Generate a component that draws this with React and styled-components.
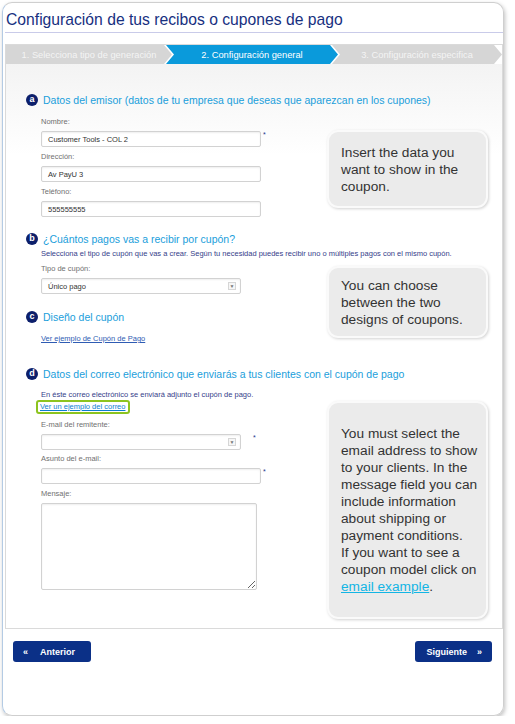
import React from 'react';
import styled, { createGlobalStyle } from 'styled-components';

const Global = createGlobalStyle`
    body {
        margin: 0;
        background: #fff;
        font-family: "Liberation Sans", Arial, sans-serif;
    }
`

const Card = styled.div`
    box-sizing: border-box;
    margin: 2px 0 0 2px;
    width: 502px;
    height: 714px;
    border: 1px solid #cfcfcf;
    border-left-color: #b4cbe4;
    border-radius: 10px;
    box-shadow: 1px 2px 4px rgba(0, 0, 0, .25);
    padding-left: 2px;
    display: flex;
    flex-direction: column;
`

const Title = styled.h1`
    margin: 0 0 11px;
    padding: 7px 0 2px 1px;
    font-size: 15.7px;
    line-height: 20px;
    font-weight: normal;
    color: #17307f;
    border-bottom: 1px solid #c9cbe9;
`

const Panel = styled.div`
    border: 1px solid #dadada;
    background: linear-gradient(#f1f1f1, #fff 110px);
`

const Steps = styled.div`
    display: flex;
    height: 19px;
    background: #fff;
`

const Step = styled.div`
    flex: ${props => props.grow ? '1' : `0 0 ${props.width}px`};
    margin-left: ${props => props.first ? 0 : -6}px;
    background: ${props => props.active ? '#0a9adb' : '#d6d6d6'};
    color: ${props => props.active ? '#fff' : '#f4f4f4'};
    font-size: 9.3px;
    display: flex;
    align-items: center;
    justify-content: center;
    clip-path: ${props => props.first
        ? 'polygon(0 0, calc(100% - 8px) 0, 100% 50%, calc(100% - 8px) 100%, 0 100%)'
        : 'polygon(0 0, calc(100% - 8px) 0, 100% 50%, calc(100% - 8px) 100%, 0 100%, 8px 50%)'};
`

const Content = styled.div`
    padding: 29px 14px 9px 20px;
`

const Heading = styled.div`
    display: flex;
    align-items: center;
    gap: 5px;
    margin-top: ${props => props.top || 0}px;
    height: 14px;
    font-size: 10.5px;
    color: #1a9edb;
    white-space: nowrap;
`

const Badge = styled.span`
    width: 12px;
    height: 12px;
    border-radius: 50%;
    background: #0c1f6b;
    color: #fff;
    font-size: 9px;
    font-weight: bold;
    line-height: 11px;
    text-align: center;
    flex: none;
`

const Note = styled.div`
    margin: ${props => props.top || 0}px 0 0 ${props => props.indent || 0}px;
    font-size: 7.5px;
    line-height: 10px;
    color: #35408a;
    white-space: nowrap;
`

const Row = styled.div`
    display: grid;
    grid-template-columns: 1fr 161px;
    align-items: start;
`

const Fields = styled.div`
    display: flex;
    flex-direction: column;
    align-items: flex-start;
`

const Label = styled.div`
    margin: ${props => props.top || 4}px 0 4px 15px;
    font-size: 7.5px;
    line-height: 11px;
    color: #707070;
`

const FieldLine = styled.div`
    display: flex;
    align-items: flex-start;
    margin-left: 15px;
`

const Input = styled.div`
    box-sizing: border-box;
    width: ${props => props.width}px;
    height: 16px;
    border: 1px solid #d2d2d2;
    border-radius: 2px;
    background: #fff;
    box-shadow: inset 0 1px 2px rgba(0, 0, 0, .07);
    padding: 0 4px 0 6px;
    display: flex;
    align-items: center;
    justify-content: space-between;
    font-size: 7.5px;
    color: #333;
`

const Arrow = styled.span`
    box-sizing: border-box;
    width: 8px;
    height: 8px;
    border: 1px solid #d6d6d6;
    background: #f6f6f6;
    color: #777;
    font-size: 5px;
    line-height: 6px;
    text-align: center;
`

const TextArea = styled.textarea`
    box-sizing: border-box;
    margin-left: 15px;
    width: 216px;
    height: 87px;
    border: 1px solid #d2d2d2;
    border-radius: 2px;
    background: #fff;
    box-shadow: inset 0 1px 2px rgba(0, 0, 0, .07);
    resize: both;
    outline: none;
`

const Star = styled.span`
    margin-left: ${props => props.gap || 2}px;
    font-size: 7px;
    line-height: 7px;
    color: #24358a;
`

const SmallLink = styled.a`
    margin: ${props => props.top || 0}px 0 0 15px;
    font-size: 7.5px;
    line-height: 10px;
    color: #2f5cb3;
    text-decoration: underline;
`

const Boxed = styled.a`
    box-sizing: border-box;
    margin-left: 10px;
    height: 14px;
    padding: 0 3px 0 2px;
    border: 2px solid #8dc41f;
    border-radius: 3px;
    font-size: 7.5px;
    line-height: 10px;
    color: #0d7fd0;
    text-decoration: underline;
    white-space: nowrap;
`

const Bubble = styled.div`
    box-sizing: border-box;
    margin-top: ${props => props.top}px;
    height: ${props => props.height}px;
    padding: 0 2px 0 12px;
    display: flex;
    align-items: center;
    background: #ebebeb;
    border: 2px solid #fafafa;
    border-radius: 11px;
    box-shadow: 1px 1px 3px rgba(0, 0, 0, .18);
    font-size: 13.7px;
    line-height: 17px;
    color: #333;

    a {
        color: #13b5e4;
        text-decoration: underline;
    }
`

const Footer = styled.div`
    display: flex;
    justify-content: space-between;
    padding: 12px 11px 0 8px;
`

const Button = styled.button`
    box-sizing: border-box;
    width: ${props => props.width}px;
    height: 21px;
    border: none;
    border-radius: 3px;
    background: #0b3087;
    color: #fff;
    font-family: inherit;
    font-size: 9px;
    font-weight: bold;
    display: flex;
    align-items: center;
    gap: ${props => props.gap}px;
    padding: 0 10px;
    justify-content: ${props => props.right ? 'flex-end' : 'flex-start'};
`

const App = () => {
    return (
        <>
            <Global />
            <Card>
                <Title>Configuración de tus recibos o cupones de pago</Title>
                <Panel>
                    <Steps>
                        <Step first width={166}>1. Selecciona tipo de generación</Step>
                        <Step active width={172}>2. Configuración general</Step>
                        <Step grow>3. Configuración especifica</Step>
                    </Steps>
                    <Content>
                        <Heading>
                            <Badge>a</Badge>
                            Datos del emisor (datos de tu empresa que deseas que aparezcan en los cupones)
                        </Heading>
                        <Row>
                            <Fields>
                                <Label top={9}>Nombre:</Label>
                                <FieldLine>
                                    <Input width={220}>Customer Tools - COL 2</Input>
                                    <Star>*</Star>
                                </FieldLine>
                                <Label>Dirección:</Label>
                                <FieldLine>
                                    <Input width={220}>Av PayU 3</Input>
                                </FieldLine>
                                <Label>Teléfono:</Label>
                                <FieldLine>
                                    <Input width={220}>555555555</Input>
                                </FieldLine>
                            </Fields>
                            <Bubble top={23} height={78}>
                                <span>Insert the data you want to show in the coupon.</span>
                            </Bubble>
                        </Row>

                        <Heading top={15}>
                            <Badge>b</Badge>
                            ¿Cuántos pagos vas a recibir por cupón?
                        </Heading>
                        <Note top={3} indent={15}>
                            Selecciona el tipo de cupón que vas a crear. Según tu necesidad puedes recibir uno o múltiples pagos con el mismo cupón.
                        </Note>
                        <Row>
                            <Fields>
                                <Label top={4}>Tipo de cupón:</Label>
                                <FieldLine>
                                    <Input width={200}>Único pago<Arrow>▼</Arrow></Input>
                                </FieldLine>
                                <Heading top={16}>
                                    <Badge>c</Badge>
                                    Diseño del cupón
                                </Heading>
                                <SmallLink top={10}>Ver ejemplo de Cupón de Pago</SmallLink>
                            </Fields>
                            <Bubble top={7} height={72}>
                                <span>You can choose between the two designs of coupons.</span>
                            </Bubble>
                        </Row>

                        <Heading top={23}>
                            <Badge>d</Badge>
                            Datos del correo electrónico que enviarás a tus clientes con el cupón de pago
                        </Heading>
                        <Row>
                            <Fields>
                                <Note top={9} indent={15}>En éste correo electrónico se enviará adjunto el cupón de pago.</Note>
                                <Boxed>Ver un ejemplo del correo</Boxed>
                                <Label top={5}>E-mail del remitente:</Label>
                                <FieldLine>
                                    <Input width={200}><span /><Arrow>▼</Arrow></Input>
                                    <Star gap={12}>*</Star>
                                </FieldLine>
                                <Label top={3}>Asunto del e-mail:</Label>
                                <FieldLine>
                                    <Input width={220} />
                                    <Star>*</Star>
                                </FieldLine>
                                <Label>Mensaje:</Label>
                                <TextArea />
                            </Fields>
                            <Bubble top={20} height={218}>
                                <span>
                                    You must select the email address to show to your clients. In the message field you can include information about shipping or payment conditions.<br />
                                    If you want to see a coupon model click on <a>email example</a>.
                                </span>
                            </Bubble>
                        </Row>
                    </Content>
                </Panel>
                <Footer>
                    <Button width={78} gap={12}><span>«</span>Anterior</Button>
                    <Button width={77} gap={10} right>Siguiente<span>»</span></Button>
                </Footer>
            </Card>
        </>
    );
};

export default App;
